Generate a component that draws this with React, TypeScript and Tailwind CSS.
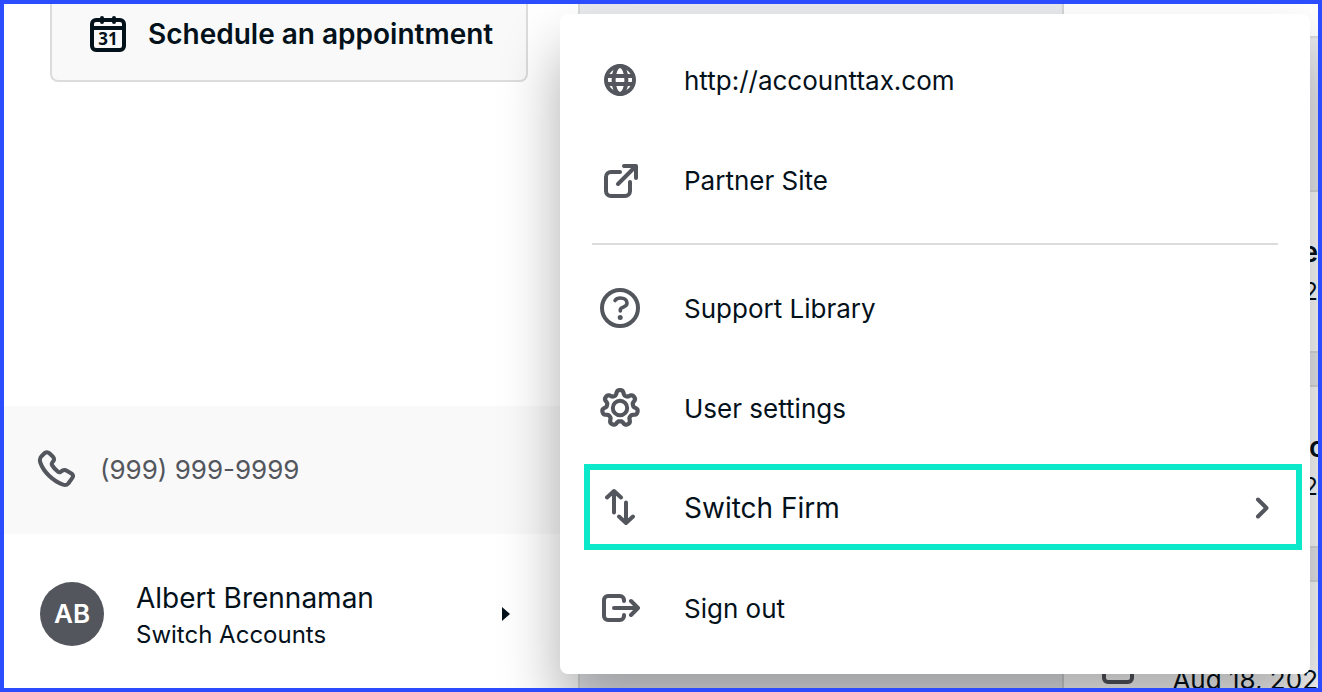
import type { ReactNode } from "react";

const GEAR_POINTS = Array.from({ length: 140 }, (_, i) => {
  const a = (i / 140) * Math.PI * 2;
  const r = 15.6 + 2.5 * Math.tanh(1.7 * Math.cos(7 * a));
  return `${(20 + r * Math.sin(a)).toFixed(2)},${(20 - r * Math.cos(a)).toFixed(2)}`;
}).join(" ");

function Icon({ children }: { children: ReactNode }) {
  return (
    <svg
      viewBox="0 0 40 40"
      className="h-10 w-10 shrink-0"
      fill="none"
      stroke="currentColor"
      strokeWidth={4}
      strokeLinecap="round"
      strokeLinejoin="round"
      aria-hidden="true"
    >
      {children}
    </svg>
  );
}

function GlobeIcon() {
  return (
    <Icon>
      <g strokeWidth={4}>
        <circle cx="20" cy="20" r="14" />
        <ellipse cx="20" cy="20" rx="6.4" ry="14" />
        <path d="M7 16h26M7 24h26" />
      </g>
    </Icon>
  );
}

function ExternalIcon() {
  return (
    <Icon>
      <path d="M20 12H11a5 5 0 0 0-5 5v14a5 5 0 0 0 5 5h14a5 5 0 0 0 5-5v-9" />
      <path d="M18 24L35 7M24 6h12v12" />
    </Icon>
  );
}

function HelpIcon() {
  return (
    <Icon>
      <circle cx="20" cy="20" r="18" />
      <path d="M15 12.5c1.2-1.800 3-2.500 5.200-2.500 3.800 0 6.800 1.800 6.800 5.200 0 4-6.700 4.200-6.700 6.300V23" strokeWidth={3.6} />
      <circle cx="20.2" cy="29.6" r="2.5" fill="currentColor" stroke="none" />
    </Icon>
  );
}

function GearIcon() {
  return (
    <Icon>
      <polygon points={GEAR_POINTS} strokeWidth={4.2} />
      <circle cx="20" cy="20" r="7.2" />
    </Icon>
  );
}

function SwapIcon() {
  return (
    <Icon>
      <path d="M14 24.500V3M7 9.500L14 3l7 6.500M26 14.500V35M19 28.500L26 35l7-6.500" />
    </Icon>
  );
}

function SignOutIcon() {
  return (
    <Icon>
      <path d="M24 13v-1a4 4 0 0 0-4-4H8a4 4 0 0 0-4 4v16a4 4 0 0 0 4 4h12a4 4 0 0 0 4-4v-1" />
      <path d="M14 20h24M31 13l7 7-7 7" />
    </Icon>
  );
}

function PhoneIcon() {
  return (
    <Icon>
      <path d="M5.200 7.500L8.800 4q2.400-1.700 4.600.3l3.600 3.500q1.900 2.200.2 4.500l-1 1.300q-.9 1.300 0 2.800c1.500 2.500 3.700 4.800 6 6.500q1.200.8 2.400-.1l1.200-.8q2.700-1.700 5-.2l4.600 2.700q2.800 1.900.9 4.400l-4 5.600q-2 2.200-5.200 1.200C17 32 7.500 23 4.300 13.500q-1.200-3.700.9-6z" />
    </Icon>
  );
}

function CalendarIcon() {
  return (
    <svg viewBox="0 0 36 36" className="h-9 w-9 shrink-0" fill="none" stroke="currentColor" strokeWidth={4} aria-hidden="true">
      <rect x="2" y="4" width="32" height="30" rx="4" />
      <path d="M2 12h32" />
      <path d="M12 2v4M24 2v4" strokeLinecap="round" />
      <text x="18" y="29" textAnchor="middle" fill="currentColor" stroke="none" className="font-['Noto_Sans',sans-serif] text-[17px] font-bold">
        31
      </text>
    </svg>
  );
}

const siteLinks = [
  { label: "http://accounttax.com", icon: <GlobeIcon /> },
  { label: "Partner Site", icon: <ExternalIcon /> },
];

const accountItems = [
  { label: "Support Library", icon: <HelpIcon /> },
  { label: "User settings", icon: <GearIcon /> },
  { label: "Switch Firm", icon: <SwapIcon />, active: true },
  { label: "Sign out", icon: <SignOutIcon /> },
];

function Sidebar() {
  return (
    <aside className="flex w-[576px] shrink-0 flex-col border-r-2 border-[#d9d9d9] bg-white">
      <button
        type="button"
        className="ml-[46px] mr-[50px] flex h-[78px] items-center gap-[22px] rounded-b-lg border-2 border-t-0 border-[#dcdcdc] bg-[#f9f9f9] pb-4 pl-[38px] text-[28px] font-semibold"
      >
        <CalendarIcon />
        Schedule an appointment
      </button>
      <a href="#phone" className="mt-auto flex h-32 items-center gap-6 bg-[#f9f9f9] px-8 pb-0.5 text-[26px] text-[#53565d]">
        <PhoneIcon />
        (999) 999-9999
      </a>
      <button type="button" className="flex h-[154px] items-start gap-8 pl-9 pr-[68px] pt-12 text-left">
        <span className="flex h-16 w-16 items-center justify-center rounded-full bg-[#53565d] pb-0.5 text-[26px] font-semibold text-white">
          AB
        </span>
        <span className="flex flex-1 flex-col">
          <span className="text-[28px] leading-8">Albert Brennaman</span>
          <span className="text-[24px] leading-[42px]">Switch Accounts</span>
        </span>
        <svg viewBox="0 0 8 16" className="mt-6 h-4 w-2" fill="currentColor" aria-hidden="true">
          <path d="M0 1l8 7-8 7z" />
        </svg>
      </button>
    </aside>
  );
}

const cards = [
  { title: "e", titleClass: "" },
  { title: "o", titleClass: "-mr-2" },
];

function Panel() {
  return (
    <section className="flex w-[256px] shrink-0 flex-col border-l-2 border-[#d5d5d5] bg-[#e8eaee]">
      <div className="h-[34px] shrink-0 border-b-2 border-[#dcdcdc] bg-white" />
      <div className="mt-[152px] flex flex-col gap-8">
        {cards.map(({ title, titleClass }) => (
          <article key={title} className="h-[163px] border-y-2 border-[#dcdcdc] bg-white pt-10 text-right">
            <h3 className={`text-[28px] font-semibold leading-10 ${titleClass}`}>{title}</h3>
            <p className="text-[24px] leading-10">2</p>
          </article>
        ))}
        <article className="flex h-[163px] items-start justify-between border-y-2 border-[#dcdcdc] bg-white pl-9 pt-[70px]">
          <svg viewBox="0 0 36 36" className="h-9 w-9 text-[#53565d]" fill="none" stroke="currentColor" strokeWidth={4} aria-hidden="true">
            <rect x="4" y="4" width="28" height="26" rx="4" />
          </svg>
          <p className="whitespace-nowrap pt-2 text-[26px] leading-10">Aug 18, 202</p>
        </article>
      </div>
    </section>
  );
}

function AccountMenu() {
  return (
    <nav
      aria-label="Account"
      className="absolute left-[556px] right-2 top-2.5 rounded-lg bg-white py-4 text-[26px] shadow-[0_36px_60px_rgba(0,0,0,0.32)]"
    >
      {siteLinks.map((item) => (
        <a key={item.label} href="#site" className="flex h-[100px] items-center gap-11 px-10">
          <span className="text-[#53565d]">{item.icon}</span>
          {item.label}
        </a>
      ))}
      <hr className="mx-8 my-[13px] border-t-2 border-[#dcdcdc]" />
      {accountItems.map((item) => (
        <button
          key={item.label}
          type="button"
          className={`relative flex h-[100px] w-full items-center gap-11 px-10 text-left ${item.active ? "text-[28px]" : ""}`}
        >
          <span className="text-[#53565d]">{item.icon}</span>
          {item.label}
          {item.active && (
            <>
              <svg
                viewBox="0 0 16 24"
                className="ml-auto h-6 w-4 text-[#53565d]"
                fill="none"
                stroke="currentColor"
                strokeWidth={4}
                strokeLinecap="round"
                strokeLinejoin="round"
                aria-hidden="true"
              >
                <path d="M4 3.500l8.500 8.500L4 20.500" />
              </svg>
              <span className="pointer-events-none absolute bottom-2 left-6 right-2 top-1.5 border-[6px] border-[#0ce8ca]" />
            </>
          )}
        </button>
      ))}
    </nav>
  );
}

export default function App() {
  return (
    <div className="relative flex h-screen overflow-hidden border-4 border-[#2b4dff] font-['Inter',sans-serif] text-[#03111b]">
      <Sidebar />
      <main className="flex-1 bg-[#e8eaee]" />
      <Panel />
      <AccountMenu />
    </div>
  );
}
